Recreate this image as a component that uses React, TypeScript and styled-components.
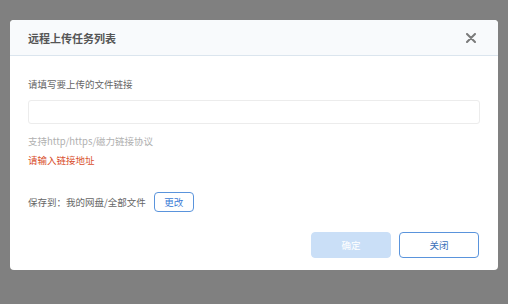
import React, { useState } from 'react'
import styled, { createGlobalStyle } from 'styled-components'

const GlobalStyle = createGlobalStyle`
  html, body {
    margin: 0;
    padding: 0;
    background: #808080;
    font-family: "Noto Sans CJK SC", "Noto Sans", "Liberation Sans", sans-serif;
  }
  * { box-sizing: border-box; }
`

const Page = styled.div`
  width: 508px;
  height: 304px;
  padding: 20px 10px 0 10px;
`

const Dialog = styled.div`
  width: 488px;
  background: #fff;
  border-radius: 4px;
  overflow: hidden;
`

const Header = styled.div`
  height: 36px;
  display: flex;
  align-items: center;
  justify-content: space-between;
  padding: 0 22px 0 18px;
  background: #f8fafc;
  border-bottom: 1px solid #dbe5ee;
`

const Title = styled.h3`
  margin: 0;
  font-size: 11px;
  font-weight: 700;
  color: #555;
  letter-spacing: 0;
`

const CloseBtn = styled.button`
  border: none;
  background: none;
  padding: 0;
  width: 10px;
  height: 10px;
  display: flex;
  cursor: pointer;
`

const Body = styled.div`
  padding: 0 18px 12px 18px;
  display: flex;
  flex-direction: column;
`

const Text = styled.div<{ $color: string; $mt: number }>`
  font-size: 9.5px;
  line-height: 12px;
  height: 12px;
  color: ${({ $color }) => $color};
  margin-top: ${({ $mt }) => $mt}px;
  white-space: nowrap;
`

const Input = styled.input`
  margin-top: 10px;
  height: 24px;
  width: 100%;
  border: 1px solid #ececec;
  border-radius: 3px;
  padding: 0 8px;
  font-size: 9.5px;
  outline: none;
`

const SaveRow = styled.div`
  margin-top: 26px;
  height: 20px;
  display: flex;
  align-items: center;
  font-size: 9.5px;
  color: #666;
`

const SmallButton = styled.button`
  margin-left: 8px;
  width: 40px;
  height: 20px;
  border: 1px solid #5a94dc;
  border-radius: 4px;
  background: #fff;
  color: #3a7bd5;
  font-size: 9.5px;
  font-family: inherit;
  padding: 0;
`

const Footer = styled.div`
  margin-top: 20px;
  display: flex;
  justify-content: flex-end;
  gap: 8px;
  padding-right: 1px;
`

const FooterButton = styled.button<{ $primary?: boolean }>`
  width: 80px;
  height: 26px;
  border-radius: 4px;
  font-size: 9.5px;
  font-family: inherit;
  padding: 0;
  border: 1px solid ${({ $primary }) => ($primary ? '#cadff7' : '#5a94dc')};
  background: ${({ $primary }) => ($primary ? '#cadff7' : '#fff')};
  color: ${({ $primary }) => ($primary ? '#fff' : '#3a6fb8')};
`

const App: React.FC = () => {
  const [url, setUrl] = useState('')
  return (
    <Page>
      <GlobalStyle />
      <Dialog>
        <Header>
          <Title>远程上传任务列表</Title>
          <CloseBtn>
            <svg width="10" height="10" viewBox="0 0 10 10">
              <path d="M1 1 L9 9 M9 1 L1 9" stroke="#7a7a7a" strokeWidth="2" strokeLinecap="round" />
            </svg>
          </CloseBtn>
        </Header>
        <Body>
          <Text $color="#666" $mt={22}>请填写要上传的文件链接</Text>
          <Input value={url} onChange={(e) => setUrl(e.target.value)} />
          <Text $color="#b0b0b0" $mt={11}>支持http/https/磁力链接协议</Text>
          <Text $color="#d9502e" $mt={7}>请输入链接地址</Text>
          <SaveRow>
            保存到：我的网盘/全部文件
            <SmallButton>更改</SmallButton>
          </SaveRow>
          <Footer>
            <FooterButton $primary disabled={!url}>确定</FooterButton>
            <FooterButton>关闭</FooterButton>
          </Footer>
        </Body>
      </Dialog>
    </Page>
  )
}

export default App
